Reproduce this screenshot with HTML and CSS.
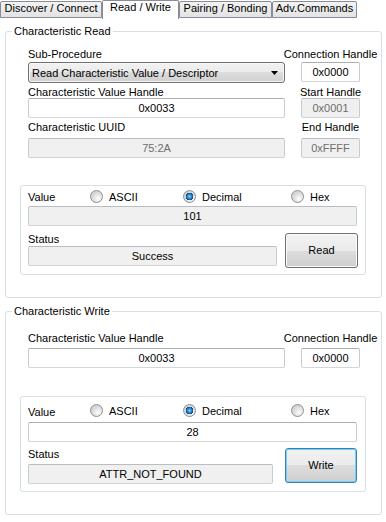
FILE: index.html
```html
<!DOCTYPE html>
<html lang="en">
<head>
  <meta charset="UTF-8">
  <title>Read / Write</title>
  <link rel="stylesheet" href="styles.css">
</head>
<body>
  <div class="tabs">
    <div class="tab tab-discover">Discover / Connect</div>
    <div class="tab tab-rw active">Read / Write</div>
    <div class="tab tab-pair">Pairing / Bonding</div>
    <div class="tab tab-adv">Adv.Commands</div>
  </div>

  <fieldset class="group group-read">
    <legend>Characteristic Read</legend>
    <div class="fields fields-read">
      <span class="lbl">Sub-Procedure</span>
      <span class="lbl side">Connection Handle</span>
      <div class="combo">
        <span>Read Characteristic Value / Descriptor</span>
        <svg width="7" height="4" viewBox="0 0 7 4"><path d="M0 0h7L3.5 4z" fill="#000"/></svg>
      </div>
      <input class="box" value="0x0000">
      <span class="lbl">Characteristic Value Handle</span>
      <span class="lbl side">Start Handle</span>
      <input class="box" value="0x0033">
      <input class="box" value="0x0001" disabled>
      <span class="lbl">Characteristic UUID</span>
      <span class="lbl side">End Handle</span>
      <input class="box" value="75:2A" disabled>
      <input class="box" value="0xFFFF" disabled>
    </div>

    <div class="panel panel-read">
      <div class="value-row">
        <span class="value-label">Value</span>
        <label class="opt"><input class="radio" type="radio" name="readFmt">ASCII</label>
        <label class="opt"><input class="radio" type="radio" name="readFmt" checked>Decimal</label>
        <label class="opt"><input class="radio" type="radio" name="readFmt">Hex</label>
      </div>
      <input class="box ro value-box" value="101" readonly>
      <div class="status status-read">
        <span class="status-label">Status</span>
        <input class="box ro status-box" value="Success" readonly>
        <button class="btn">Read</button>
      </div>
    </div>
  </fieldset>

  <fieldset class="group group-write">
    <legend>Characteristic Write</legend>
    <div class="fields fields-write">
      <span class="lbl">Characteristic Value Handle</span>
      <span class="lbl side">Connection Handle</span>
      <input class="box" value="0x0033">
      <input class="box" value="0x0000">
    </div>

    <div class="panel panel-write">
      <div class="value-row">
        <span class="value-label">Value</span>
        <label class="opt"><input class="radio" type="radio" name="writeFmt">ASCII</label>
        <label class="opt"><input class="radio" type="radio" name="writeFmt" checked>Decimal</label>
        <label class="opt"><input class="radio" type="radio" name="writeFmt">Hex</label>
      </div>
      <input class="box value-box" value="28">
      <div class="status status-write">
        <span class="status-label">Status</span>
        <input class="box ro status-box" value="ATTR_NOT_FOUND" readonly>
        <button class="btn btn-focus">Write</button>
      </div>
    </div>
  </fieldset>
</body>
</html>
```

FILE: styles.css
```css
* {
  box-sizing: border-box;
}
body {
  margin: 0;
  background: #fff;
  color: #000;
  font-family: 'Liberation Sans', Arial, sans-serif;
  font-size: 11px;
  overflow: hidden;
}

/* tab strip */
.tabs {
  display: flex;
  align-items: flex-start;
  height: 19px;
}
.tab {
  margin-top: 1px;
  height: 17px;
  line-height: 12px;
  text-align: center;
  white-space: nowrap;
  border: 1px solid #898c95;
  border-radius: 2px 2px 0 0;
  background: linear-gradient(#f3f3f3, #e3e3e3);
}
.tab.active {
  margin-top: 0;
  height: 19px;
  border-bottom: none;
  background: #fff;
}
.tab-discover { width: 102px; }
.tab-rw { width: 77px; }
.tab-pair { width: 93px; }
.tab-adv { width: 85px; }

/* group boxes */
.group {
  width: 377px;
  min-width: 0;
  margin: 6px 0 0 5px;
  padding: 7px 15px 22px 14px;
  border: 1px solid #d5dfe5;
  border-radius: 3px;
}
.group legend {
  margin-left: -8px;
  padding: 0 2px;
  line-height: 13px;
}
.group-write {
  margin-top: 7px;
  padding-top: 11px;
}

.fields {
  display: grid;
  grid-template-columns: 257px 59px;
  column-gap: 16px;
  margin-left: 8px;
}
.fields-read {
  grid-template-rows: 17px 21px 15px 20px 20px 20px;
}
.fields-write {
  grid-template-rows: 19px 20px;
}
.lbl {
  padding-top: 3px;
  line-height: 12px;
  white-space: nowrap;
}
.lbl.side {
  justify-self: center;
}

/* text boxes */
.box {
  width: 100%;
  height: 20px;
  padding: 0;
  font: inherit;
  color: #000;
  text-align: center;
  background: #fff;
  border: 1px solid;
  border-color: #abadb3 #c7cace #d3d6da #c7cace;
  border-radius: 2px;
  outline: none;
}
.box:disabled {
  color: #6d6d6d;
  background: #f0f0f0;
  border-color: #b9bcc0 #c9cbce #d0d2d4 #c9cbce;
}
.box.ro {
  background: #f0f0f0;
  border-color: #b9bcc0 #c9cbce #d0d2d4 #c9cbce;
}

.combo {
  display: flex;
  align-items: center;
  justify-content: space-between;
  height: 21px;
  padding: 0 6px 0 3px;
  white-space: nowrap;
  border: 1px solid #707070;
  border-radius: 3px;
  background: linear-gradient(#f2f2f2, #ebebeb 50%, #dddddd 50%, #cfcfcf);
  box-shadow: inset 0 0 0 1px #f8f8f8;
}

/* inner value / status panels */
.panel {
  padding-left: 7px;
  border: 1px solid #d5dfe5;
  border-radius: 3px;
}
.panel-read {
  margin-top: 27px;
  padding-top: 4px;
  padding-bottom: 6px;
}
.panel-write {
  margin-top: 28px;
  padding-top: 6px;
  padding-bottom: 7px;
}
.value-row {
  display: grid;
  grid-template-columns: 62px 93px 108px auto;
  align-items: center;
  height: 13px;
}
.value-label {
  line-height: 12px;
}
.panel-write .value-label {
  margin-top: 3px;
}
.opt {
  display: flex;
  align-items: center;
  gap: 6px;
  line-height: 12px;
}
.radio {
  appearance: none;
  -webkit-appearance: none;
  width: 13px;
  height: 13px;
  margin: 0;
  border: 1px solid #8f8f8f;
  border-radius: 50%;
  background: radial-gradient(circle at 65% 70%, #ffffff 0, #f1f1f1 2px, #d3d3d3 7px);
}
.radio:checked {
  background:
    radial-gradient(circle, #8fdcff 0, #3d9ee0 1.5px, #1a5fa8 3px, #174f8c 3.6px, transparent 4px),
    radial-gradient(circle at 65% 70%, #ffffff 0, #f1f1f1 2px, #d3d3d3 7px);
}
.value-box {
  width: 329px;
  margin-top: 3px;
}
.panel-write .value-box {
  margin-top: 6px;
}

.status {
  display: grid;
  margin-top: 7px;
}
.status-read {
  grid-template-columns: 249px 73px;
  grid-template-rows: 13px 22px;
  column-gap: 8px;
}
.status-write {
  grid-template-columns: 245px 72px;
  grid-template-rows: 16px 20px;
  column-gap: 12px;
  margin-top: 6px;
}
.status-label {
  line-height: 12px;
}
.status-box {
  grid-column: 1;
  grid-row: 2;
}
.btn {
  grid-column: 2;
  grid-row: 1 / 3;
  height: 35px;
  padding: 0 0 2px;
  font: inherit;
  color: #000;
  border: 1px solid #707070;
  border-radius: 3px;
  background: linear-gradient(#f2f2f2, #ebebeb 50%, #dddddd 50%, #cfcfcf);
  box-shadow: inset 0 0 0 1px #fbfbfb;
}
.btn-focus {
  border-color: #3c7fb1;
  box-shadow: inset 0 0 0 1px #6fd3f7;
}
```
